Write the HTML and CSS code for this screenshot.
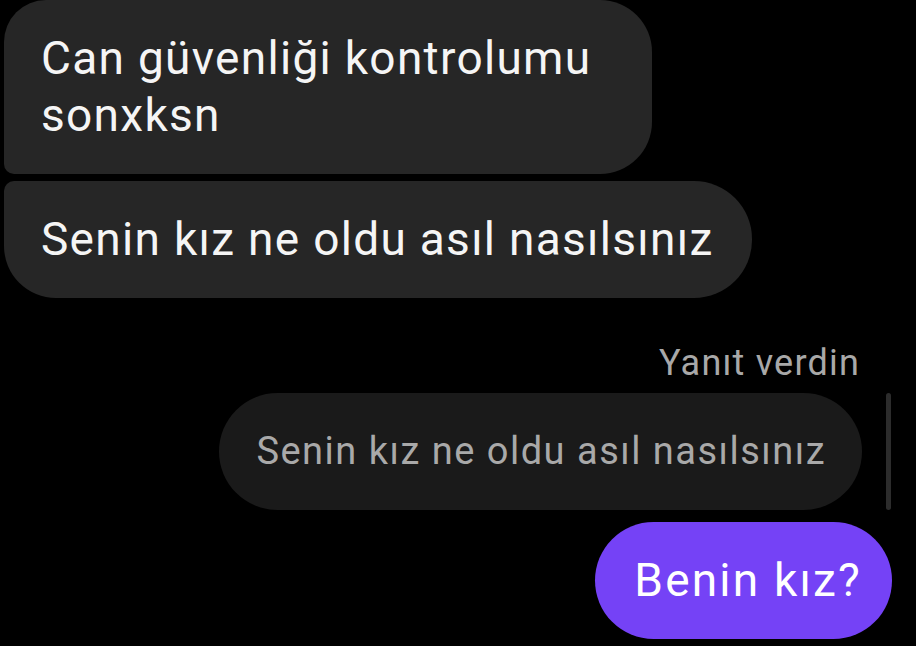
FILE: index.html
```html
<!DOCTYPE html>
<html lang="tr">
<head>
<meta charset="utf-8">
<title>Mesajlar</title>
<link rel="stylesheet" href="styles.css">
</head>
<body>
<main class="thread">
  <section class="received">
    <div class="bubble in first">Can güvenliği kontrolumu sonxksn</div>
    <div class="bubble in last">Senin kız ne oldu asıl nasılsınız</div>
  </section>
  <section class="sent">
    <div class="reply-label">Yanıt verdin</div>
    <div class="reply-row">
      <div class="bubble quoted">Senin kız ne oldu asıl nasılsınız</div>
      <div class="reply-bar"></div>
    </div>
    <div class="bubble out">Benin kız?</div>
  </section>
</main>
</body>
</html>
```

FILE: styles.css
```css
html, body {
  margin: 0;
  padding: 0;
  background: #000;
}
body {
  width: 916px;
  height: 646px;
  overflow: hidden;
  font-family: Roboto, "Noto Sans", "Liberation Sans", sans-serif;
  font-weight: 400;
  color: #f5f5f5;
}
.thread {
  display: flex;
  flex-direction: column;
}
.received {
  display: flex;
  flex-direction: column;
  align-items: flex-start;
  gap: 7px;
  padding-left: 4px;
}
.bubble {
  box-sizing: border-box;
  font-size: 46px;
  line-height: 57px;
  letter-spacing: 1.3px;
}
.in {
  background: #262626;
  padding: 30px 38px 30px 37px;
}
.first {
  max-width: 648px;
  border-radius: 42px 52px 52px 10px;
}
.last {
  border-radius: 10px 58px 58px 52px;
}
.sent {
  display: flex;
  flex-direction: column;
  align-items: flex-end;
  padding-right: 24px;
  margin-top: 43px;
}
.reply-label {
  font-size: 36px;
  line-height: 44px;
  letter-spacing: 1.2px;
  color: #a8a8a8;
  margin-right: 32px;
}
.reply-row {
  display: flex;
  align-items: stretch;
  gap: 24px;
  margin-top: 8px;
  margin-right: 1px;
}
.quoted {
  background: #1a1a1a;
  color: #a9a9a9;
  font-size: 38px;
  line-height: 57px;
  letter-spacing: 1.5px;
  padding: 30px 36px 30px 37px;
  border-radius: 59px;
}
.reply-bar {
  width: 5px;
  background: #2c2c2c;
  border-radius: 3px;
}
.out {
  margin-top: 12px;
  background: #7542f6;
  color: #fff;
  letter-spacing: 2.2px;
  padding: 30px 30px 30px 39px;
  border-radius: 59px;
}
```
